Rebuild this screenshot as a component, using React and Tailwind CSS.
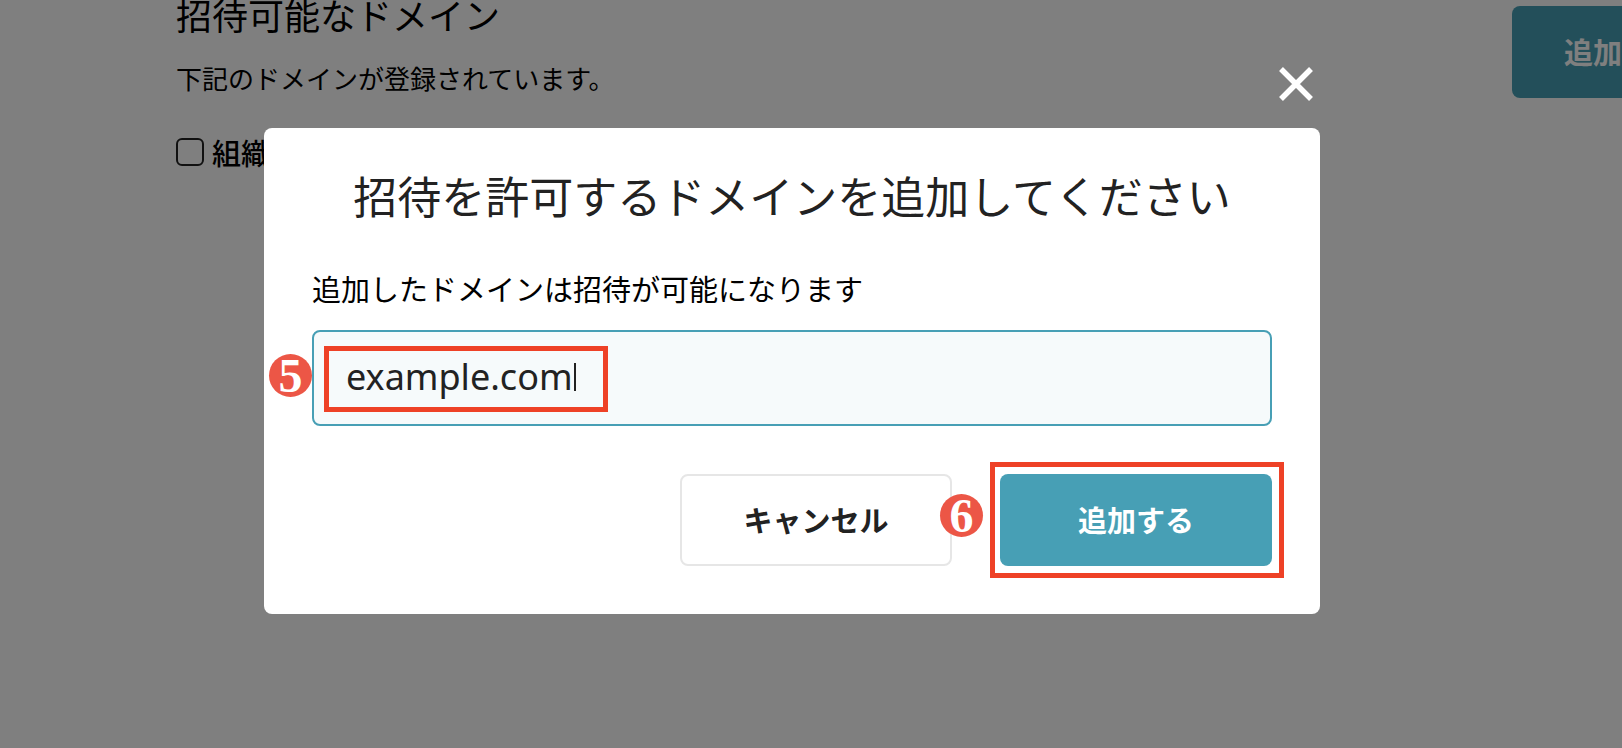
import { useState } from 'react';

function StepBadge({ number, className }) {
  return (
    <span
      className={`absolute flex size-[43px] items-center justify-center rounded-full bg-[#ec5646] font-['Liberation_Serif'] text-[48px] leading-none font-bold text-white ${className}`}
    >
      {number}
    </span>
  );
}

function CloseIcon() {
  return (
    <svg viewBox="0 0 34 34" className="size-[34px]" stroke="currentColor" strokeWidth="5.5" aria-hidden="true">
      <path d="M2 2 L32 32 M32 2 L2 32" />
    </svg>
  );
}

function DomainSettings() {
  return (
    <main className="pl-44">
      <div className="flex items-start justify-between">
        <div>
          <h1 className="text-4xl leading-7 text-black">招待可能なドメイン</h1>
          <p className="mt-[30px] text-[26px] leading-10 text-black">下記のドメインが登録されています。</p>
        </div>
        <button
          type="button"
          className="mt-[6px] -mr-[162px] h-23 w-[272px] shrink-0 rounded-lg bg-[#479fb5] pl-13 text-left text-[29px] font-bold text-white"
        >
          追加する
        </button>
      </div>
      <label className="mt-[34px] flex items-center gap-2 text-[29px] leading-10 font-medium text-black">
        <input type="checkbox" className="size-7 appearance-none rounded-md border-2 border-[#222] bg-transparent" />
        組織
      </label>
    </main>
  );
}

function AddDomainModal() {
  const [domain, setDomain] = useState('example.com');

  return (
    <div className="fixed inset-0 flex items-start justify-center bg-black/50 pt-32 pr-[38px]">
      <div
        role="dialog"
        aria-modal="true"
        aria-labelledby="modal-title"
        className="relative w-full max-w-[1056px] rounded-lg bg-white px-12 pt-[34px] pb-12"
      >
        <button
          type="button"
          aria-label="閉じる"
          className="absolute -top-17 right-0 flex size-12 items-center justify-center text-white"
        >
          <CloseIcon />
        </button>

        <h2 id="modal-title" className="text-center text-[44px] leading-[66px] text-[#222]">
          招待を許可するドメインを追加してください
        </h2>

        <label htmlFor="domain" className="mt-9 block text-[29px] leading-12 text-black">
          追加したドメインは招待が可能になります
        </label>
        <div className="relative mt-[18px]">
          <input
            id="domain"
            type="text"
            value={domain}
            onChange={(e) => setDomain(e.target.value)}
            className="block h-24 w-full rounded-lg border-2 border-[#479fb5] bg-[#f6fafb] px-8 pb-1 font-['Noto_Sans'] text-4xl text-[#222] outline-none"
          />
          <span className="absolute top-[33px] left-[262px] h-7 w-[2px] bg-[#222]" />
          <span className="absolute top-4 left-3 h-[66px] w-[284px] border-5 border-[#ee4126]" />
          <StepBadge number="5" className="top-6 -left-[43px]" />
        </div>

        <div className="mt-12 flex justify-end gap-12">
          <button
            type="button"
            className="h-23 w-[272px] rounded-lg border-2 border-[#e6e6e6] bg-white text-[29px] font-bold text-[#222]"
          >
            キャンセル
          </button>
          <div className="relative">
            <button type="button" className="h-23 w-[272px] rounded-lg bg-[#479fb5] text-[29px] font-bold text-white">
              追加する
            </button>
            <span className="absolute -inset-y-3 -right-3 -left-[10px] border-5 border-[#ee4126]" />
            <StepBadge number="6" className="top-5 -left-15" />
          </div>
        </div>
      </div>
    </div>
  );
}

export default function App() {
  return (
    <div className="min-h-screen overflow-hidden bg-white font-['Noto_Sans_CJK_JP',sans-serif]">
      <DomainSettings />
      <AddDomainModal />
    </div>
  );
}
